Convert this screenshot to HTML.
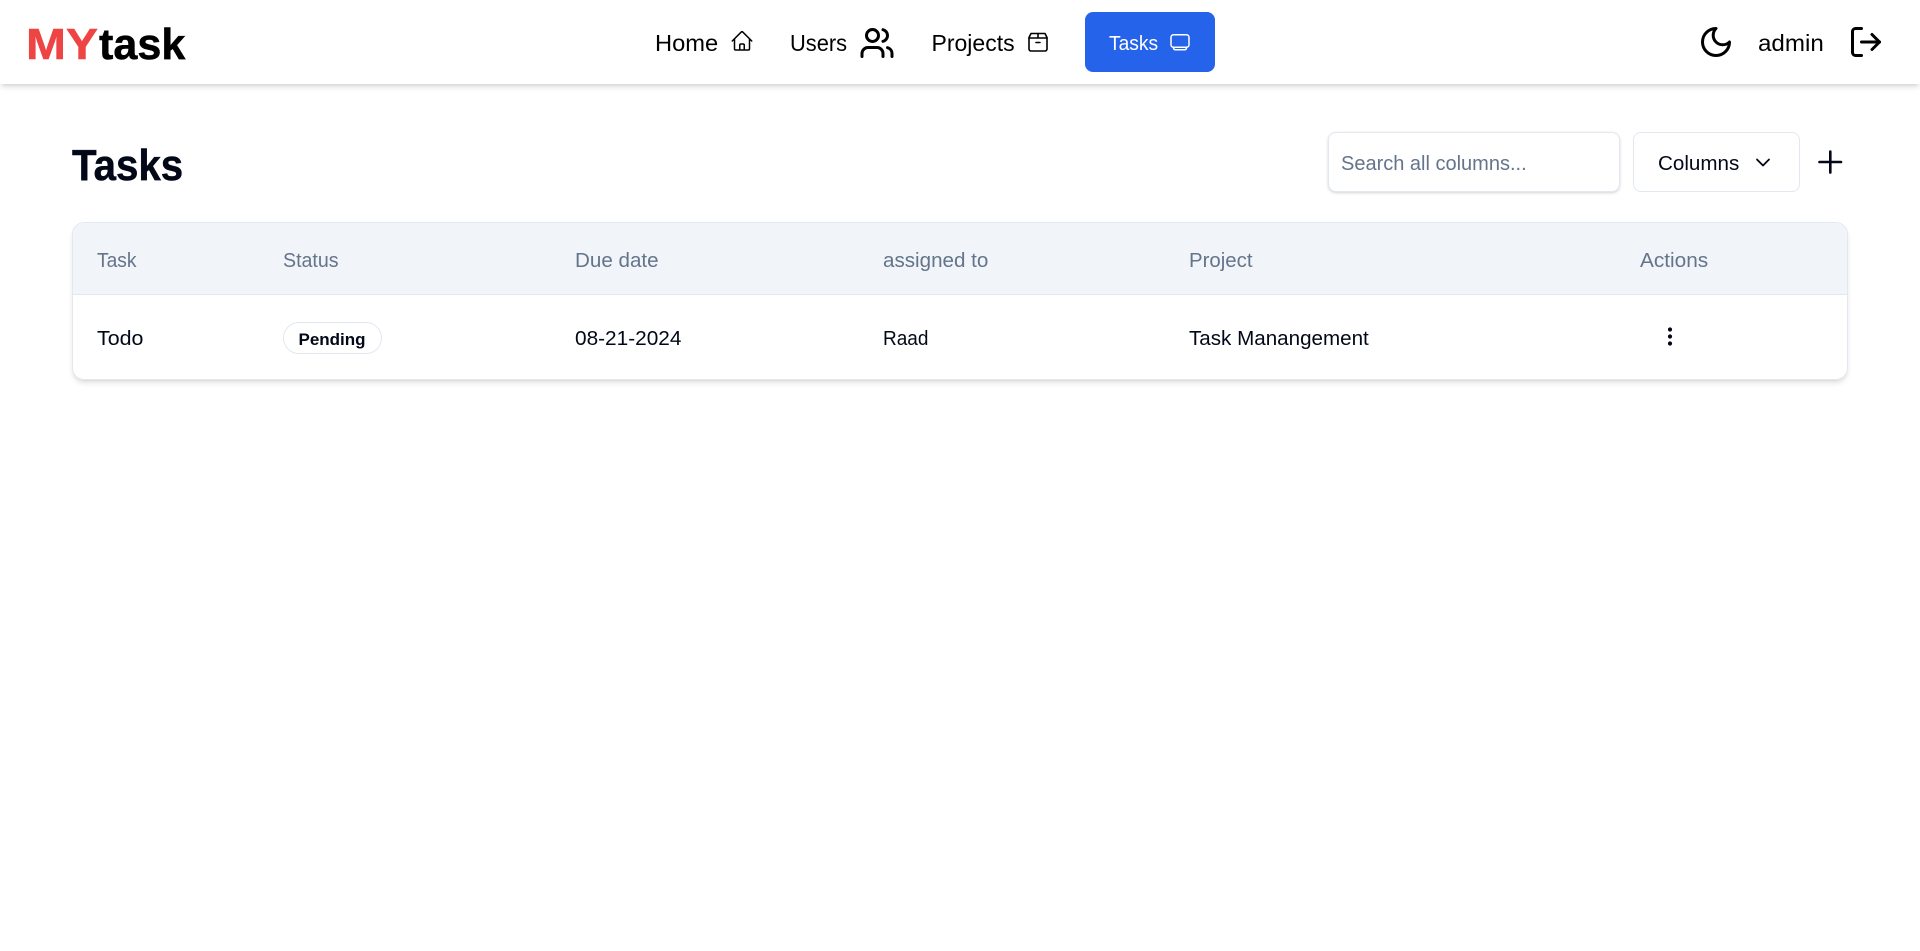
<!DOCTYPE html>
<html lang="en">
<head>
<meta charset="utf-8">
<title>MYtask - Tasks</title>
<style>
*{box-sizing:border-box;margin:0;padding:0}
html,body{width:1920px;height:951px;overflow:hidden;background:#fff}
body{position:relative;font-family:"Liberation Sans",sans-serif;color:#020817}
.t{position:absolute;white-space:nowrap;line-height:30px;height:30px;font-size:20px;transform-origin:0 50%}
.n{font-size:23px;color:#000}
.h{color:#64748b}
.big{font-size:44px;line-height:50px;height:50px;font-weight:700;-webkit-text-stroke:.5px currentColor}
svg{position:absolute;display:block;fill:none;stroke-linecap:round;stroke-linejoin:round}
header{position:absolute;left:0;top:0;width:1920px;height:84px;background:#fff;box-shadow:0 4px 6px -1px rgba(0,0,0,.12),0 2px 4px -2px rgba(0,0,0,.12)}
.btn{position:absolute;left:1085px;top:12px;width:130px;height:60px;background:#2563eb;border-radius:8px}
.search{position:absolute;left:1328px;top:132px;width:292px;height:60px;border:1px solid #e2e8f0;border-radius:8px;background:#fff;box-shadow:0 1px 3px 0 rgba(0,0,0,.14),0 1px 2px -1px rgba(0,0,0,.1)}
.cols{position:absolute;left:1633px;top:132px;width:167px;height:60px;border:1px solid #e2e8f0;border-radius:8px;background:#fff}
.table{position:absolute;left:72px;top:222px;width:1776px;height:158px;border:1px solid #e2e8f0;border-radius:12px;background:#fff;overflow:hidden}
.tw{position:absolute;left:72px;top:222px;width:1776px;height:158px;border-radius:12px;box-shadow:0 4px 6px -1px rgba(0,0,0,.1),0 2px 4px -2px rgba(0,0,0,.1)}
.thead{position:absolute;left:0;top:0;right:0;height:72px;background:#f1f5f9;border-bottom:1px solid #e2e8f0}
.badge{position:absolute;left:283px;top:322px;width:99px;height:32px;border:1px solid #e2e8f0;border-radius:16px;background:#fff}
</style>
</head>
<body>
<header></header>

<span class="t big" style="left:26px;top:20px;color:#ef4444;transform:scaleX(1.09)">MY</span>
<span class="t big" style="left:99px;top:20px;color:#000;transform:scaleX(.98)">task</span>

<span class="t n" style="left:655px;top:28px;transform:scaleX(1.03)">Home</span>
<svg style="left:730px;top:29px" width="24" height="24" viewBox="0 0 24 24" stroke="#000" stroke-width="1.5"><path d="m2.25 12 8.954-8.955c.44-.439 1.152-.439 1.591 0L21.75 12M4.5 9.75v10.125c0 .621.504 1.125 1.125 1.125H9.75v-4.875c0-.621.504-1.125 1.125-1.125h2.25c.621 0 1.125.504 1.125 1.125V21h4.125c.621 0 1.125-.504 1.125-1.125V9.75M8.25 21h8.250"/></svg>

<span class="t n" style="left:790px;top:28px;transform:scaleX(.95)">Users</span>
<svg style="left:858.500px;top:25px" width="36" height="36" viewBox="0 0 24 24" stroke="#000" stroke-width="2"><path d="M16 21v-2a4 4 0 0 0-4-4H6a4 4 0 0 0-4 4v2"/><circle cx="9" cy="7" r="4"/><path d="M22 21v-2a4 4 0 0 0-3-3.87"/><path d="M16 3.13a4 4 0 0 1 0 7.75"/></svg>

<span class="t n" style="left:931.500px;top:28px">Projects</span>
<svg style="left:1026px;top:30px" width="24" height="24" viewBox="0 0 24 24" stroke="#000" stroke-width="1.6"><path d="M3 7.500 5 3.500h14l2 4V19a2 2 0 0 1-2 2H5a2 2 0 0 1-2-2Z"/><path d="M3 8h18M12 3.500V8M10 12.500h4"/></svg>

<div class="btn"></div>
<span class="t" style="left:1109px;top:29px;color:#fff;transform:scaleX(.96)">Tasks</span>
<svg style="left:1168px;top:30px" width="24" height="24" viewBox="0 0 24 24" stroke="#fff" stroke-width="1.5"><rect x="3" y="4.750" width="18" height="12.500" rx="2.500"/><path d="M5.500 17.500c0 1.500.8 2.250 2 2.250h9c1.200 0 2-.75 2-2.250"/></svg>

<svg style="left:1698px;top:24px" width="36" height="36" viewBox="0 0 24 24" stroke="#000" stroke-width="2"><path d="M12 3a6 6 0 0 0 9 9 9 9 0 1 1-9-9Z"/></svg>
<span class="t n" style="left:1758px;top:28px;transform:scaleX(1.05)">admin</span>
<svg style="left:1848px;top:24px" width="36" height="36" viewBox="0 0 24 24" stroke="#000" stroke-width="2"><path d="M9 21H5a2 2 0 0 1-2-2V5a2 2 0 0 1 2-2h4"/><path d="m16 17 5-5-5-5"/><path d="M21 12H9"/></svg>

<span class="t big" style="left:72px;top:141px;transform:scaleX(.915)">Tasks</span>

<div class="search"></div>
<span class="t h" style="left:1341px;top:149px">Search all columns...</span>
<div class="cols"></div>
<span class="t" style="left:1658px;top:149px;transform:scaleX(1.03)">Columns</span>
<svg style="left:1750px;top:150px" width="26" height="24" viewBox="0 0 26 24" stroke="#020817" stroke-width="1.8"><path d="M7 9.500l6 6 6-6"/></svg>
<svg style="left:1818px;top:150px" width="25" height="24" viewBox="0 0 25 24" stroke="#020817" stroke-width="2.600"><path d="M12.300 1.500v21M1.500 12h21.500"/></svg>

<div class="tw"></div>
<div class="table"><div class="thead"></div></div>

<span class="t h" style="left:97px;top:246px;transform:scaleX(.96)">Task</span>
<span class="t h" style="left:283px;top:246px;transform:scaleX(.98)">Status</span>
<span class="t h" style="left:574.500px;top:246px;transform:scaleX(1.03)">Due date</span>
<span class="t h" style="left:883px;top:246px;transform:scaleX(1.03)">assigned to</span>
<span class="t h" style="left:1189px;top:246px;transform:scaleX(1.02)">Project</span>
<span class="t h" style="left:1640px;top:246px;transform:scaleX(1.04)">Actions</span>

<span class="t" style="left:97px;top:324px;transform:scaleX(1.07)">Todo</span>
<div class="badge"></div>
<span class="t" style="left:298.500px;top:325px;font-size:17px;font-weight:700;transform:scaleX(1)">Pending</span>
<span class="t" style="left:574.500px;top:324px;transform:scaleX(1.04)">08-21-2024</span>
<span class="t" style="left:883px;top:324px;transform:scaleX(.95)">Raad</span>
<span class="t" style="left:1189px;top:324px;transform:scaleX(1.03)">Task Manangement</span>
<svg style="left:1658px;top:324px" width="24" height="26" viewBox="0 0 24 26"><circle cx="12" cy="5.500" r="2.100" fill="#020817"/><circle cx="12" cy="12.500" r="2.100" fill="#020817"/><circle cx="12" cy="19.500" r="2.100" fill="#020817"/></svg>
</body>
</html>
